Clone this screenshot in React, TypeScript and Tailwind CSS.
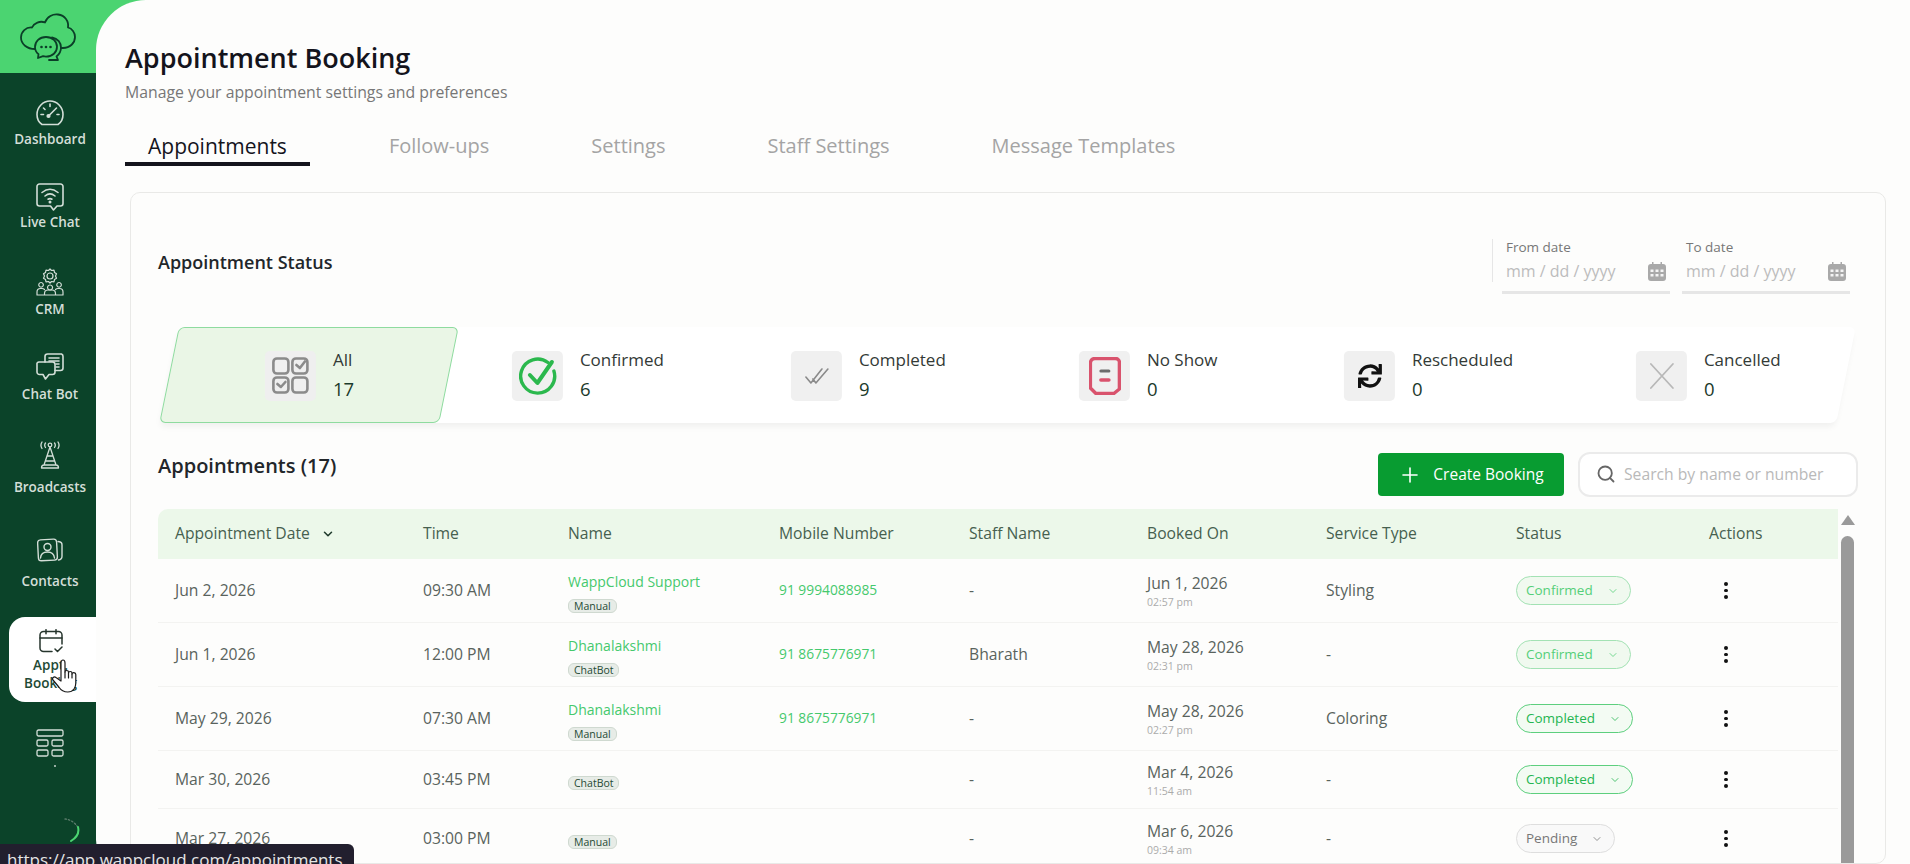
import React from "react";
import { FaSync } from "react-icons/fa";
import { Search, Plus, ChevronDown } from "lucide-react";

const s = { fill: "none", stroke: "currentColor", strokeWidth: 1.6, strokeLinecap: "round" as const, strokeLinejoin: "round" as const };

const Logo = () => (
  <svg width="56" height="48" viewBox="0 0 56 48" fill="none" stroke="#0b3f28" strokeWidth="1.8" strokeLinecap="round" strokeLinejoin="round">
    <path d="M15 36C7 36 1 31 1 24.5 1 18.5 6 14 12 14.5c2-4.500 8-7 13-5C27 3.500 33 .8 38 1.500c7 1 11 6.500 10 13 4 1 7 5 7 9.500 0 6-5 11-12 11h-2" />
    <path d="M26 24c-6.500 0-11 4.500-11 10 0 3 1.300 5.500 3.500 7.200L18 45l5-1.800c1 .3 2 .4 3 .4 6.500 0 11-4.300 11-9.800S32.500 24 26 24z" />
    <path d="M32 24.500c6 1 9 5.500 9 10 0 4-2 7-4.500 9l1.500 3.500h-9" />
    <circle cx="21.500" cy="34" r="1.300" fill="#0b3f28" stroke="none" />
    <circle cx="26" cy="34" r="1.300" fill="#0b3f28" stroke="none" />
    <circle cx="30.500" cy="34" r="1.300" fill="#0b3f28" stroke="none" />
  </svg>
);

const DashIcon = () => (
  <svg width="28" height="26" viewBox="0 0 28 26" {...s}>
    <path d="M6 24.500C3 22.500 1 19 1 14.500 1 7 7 1 14 1s13 6 13 13.500c0 4.500-2 8-5 10z" />
    <path d="M14 4v2.500M5 14.500h2.500M21 14.500h2M7.500 8l1.500 1.500M20.500 8 19 9.500M12.500 16l6-6" />
    <circle cx="12.500" cy="16" r="1.300" fill="currentColor" />
  </svg>
);
const LiveIcon = () => (
  <svg width="28" height="28" viewBox="0 0 28 28" {...s}>
    <path d="M3.500 1h21A2.500 2.500 0 0 1 27 3.500v17a2.500 2.500 0 0 1-2.500 2.500H21l-3.500 4-3-4h-11A2.500 2.500 0 0 1 1 20.500v-17A2.500 2.500 0 0 1 3.500 1z" />
    <path d="M6 9.500c5-4 11-4 16 0M9 13c3-2.500 7-2.500 10 0M12 16.200c1.300-.8 2.700-.8 4 0" />
    <circle cx="14" cy="19" r=".7" fill="currentColor" />
  </svg>
);
const CrmIcon = () => (
  <svg width="28" height="28" viewBox="0 0 28 28" {...s} strokeWidth={1.2}>
    <path d="M14 1l1.500 1.500 2.500-.3.500 2.300 2 1.300-1 2.200 1 2.200-2 1.300-.5 2.300-2.500-.3L14 15l-1.500-1.500-2.500.3-.5-2.300-2-1.300 1-2.200-1-2.200 2-1.300.5-2.300 2.500.3z" />
    <circle cx="14" cy="8" r="3" />
    <path d="M5 14.500a2.300 2.300 0 1 0 .1 0zM23 14.500a2.300 2.300 0 1 0 .1 0zM14 17a2.500 2.500 0 1 0 .1 0z" />
    <path d="M1 27v-3c0-2 1.500-3.500 3.500-3.500H6c1 0 2 .5 2.500 1M27 27v-3c0-2-1.500-3.500-3.500-3.500H22c-1 0-2 .5-2.500 1M8.500 27v-1.500c0-2 1.500-3.500 3.500-3.500h4c2 0 3.500 1.500 3.500 3.500V27M1 27h26" />
  </svg>
);
const BotIcon = () => (
  <svg width="28" height="28" viewBox="0 0 28 28" {...s}>
    <path d="M9 9V3.500A2.500 2.500 0 0 1 11.500 1h14A2.500 2.500 0 0 1 27 3.500V15a2.500 2.500 0 0 1-2.500 2.500H19" />
    <path d="M3 9h13.500A2.500 2.500 0 0 1 19 11.500V19a2.500 2.500 0 0 1-2.500 2.500H13L9.500 26 7 21.500H3.500A2.500 2.500 0 0 1 1 19v-7.500A2 2 0 0 1 3 9z" />
    <path d="M13 5h10M13 8h10M20 11h3M20 14h3" />
  </svg>
);
const TowerIcon = () => (
  <svg width="20" height="28" viewBox="0 0 20 28" {...s} strokeWidth={1.3}>
    <circle cx="10" cy="4" r="1.800" />
    <path d="M10 6 4 24M10 6l6 18M7.500 15h5M6 20h8M1.500 27c0-1.500 1-3 2.500-3h12c1.500 0 2.500 1.500 2.500 3zM5.500 2c-1 1.300-1 3 0 4.500M14.500 2c1 1.300 1 3 0 4.500M2 1c-1.300 2-1.300 4.500 0 6.500M18 1c1.300 2 1.300 4.500 0 6.500" />
  </svg>
);
const ContactIcon = () => (
  <svg width="26" height="24" viewBox="0 0 26 24" {...s} strokeWidth={1.4}>
    <rect x="1" y="1.500" width="19" height="21" rx="3" transform="rotate(-3 10 12)" />
    <path d="M21 3.500l1.500.3c1.300.3 2.500 1.500 2.500 3v11.500c0 2-1.500 3.500-3.500 3.700" />
    <circle cx="10.500" cy="9" r="3.500" />
    <path d="M3.500 20c.3-4 3-6 7-6s6.500 2 7 6" />
  </svg>
);
const ApptIcon = () => (
  <svg width="24" height="24" viewBox="0 0 24 24" fill="none" stroke="#26352d" strokeWidth="1.5" strokeLinecap="round" strokeLinejoin="round">
    <path d="M13 22.500H4.500a3.500 3.500 0 0 1-3.500-3.500V6a3.500 3.500 0 0 1 3.500-3.500h15A3.500 3.500 0 0 1 23 6v9" />
    <path d="M7 .7v4M17 .7v4M1 9h22" />
    <path d="M16 20l2.500 2.500L23 18" />
  </svg>
);
const GridIcon = () => (
  <svg width="28" height="28" viewBox="0 0 28 28" {...s} strokeWidth={1.3}>
    <rect x="1" y="1" width="26" height="6" rx="1.500" />
    <rect x="1" y="11" width="11" height="6" rx="1.500" />
    <rect x="16" y="11" width="11" height="6" rx="1.500" />
    <rect x="1" y="21" width="11" height="6" rx="1.500" />
    <rect x="16" y="21" width="11" height="6" rx="1.500" />
  </svg>
);
const HandCursor = () => (
  <svg width="27" height="34" viewBox="0 0 27 34" fill="#ffffff" stroke="#1b1b1b" strokeWidth="1.200" strokeLinejoin="round" strokeLinecap="round">
    <path d="M9 19V4c0-4 4-4 4 0v9c0-2 3.500-2 3.500 0v1c0-2 3.500-2 3.500 0v1c0-2 3.800-2 3.800 .5V24c0 4-2 9-8 9-5 0-7-2-9-5L1 21c-1.500-2 1-4 3-2.500L9 22z" />
    <path d="M13 13v6M16.500 14v5M20 15v4" />
  </svg>
);

const AllIcon = () => (
  <svg width="37" height="37" viewBox="0 0 37 37" fill="none" stroke="#8b8b8b" strokeWidth="2.600" strokeLinecap="round" strokeLinejoin="round">
    <rect x="1.500" y="1.500" width="15" height="15" rx="3.500" />
    <rect x="20.500" y="1.500" width="15" height="15" rx="3.500" />
    <rect x="1.500" y="20.500" width="15" height="15" rx="3.500" />
    <rect x="20.500" y="20.500" width="15" height="15" rx="3.500" />
    <path d="M24.500 8l3.500 3 5-6.500M5.500 27l3.500 3 4.500-5" />
  </svg>
);
const ConfirmedIcon = () => (
  <svg width="38" height="38" viewBox="0 0 38 38" fill="none" stroke="#2bb84d" strokeLinecap="round" strokeLinejoin="round">
    <path strokeWidth="3.400" d="M29 5.500A17 17 0 1 0 35 14" />
    <path strokeWidth="4" d="M11 18l7.500 8L33 5" />
  </svg>
);
const CompletedIcon = () => (
  <svg width="24" height="16" viewBox="0 0 24 16" fill="none" stroke="#8a8a8a" strokeWidth="1.600" strokeLinecap="round" strokeLinejoin="round">
    <path d="M1 9l5 6L17 1M8 11l3 4L23 1" />
  </svg>
);
const NoShowIcon = () => (
  <svg width="32" height="38" viewBox="0 0 32 38" fill="none" strokeLinecap="round" strokeLinejoin="round">
    <path stroke="#d9536d" strokeWidth="3.400" d="M6 1.500h20a4 4 0 0 1 4.500 4.500v26L25 36.500H7L1.500 31V6A4.500 4.500 0 0 1 6 1.500z" />
    <path stroke="#6c6c6c" strokeWidth="3" d="M12 14h8" />
    <path stroke="#d9536d" strokeWidth="3.500" d="M12 23h8" />
  </svg>
);
const CancelledIcon = () => (
  <svg width="24" height="26" viewBox="0 0 24 26" fill="none" stroke="#b8b8b8" strokeWidth="1.800" strokeLinecap="round">
    <path d="M1 1l22 24M23 1 1 25" />
  </svg>
);
const CalIcon = () => (
  <svg width="18" height="19" viewBox="0 0 18 19" fill="#a9a9a9">
    <path d="M4 0h1.500v2h7V0H14v2h1a3 3 0 0 1 3 3v11a3 3 0 0 1-3 3H3a3 3 0 0 1-3-3V5a3 3 0 0 1 3-3h1z" />
    <g fill="#f4f4f4">
      <rect x="2.500" y="7.500" width="3" height="2.500" />
      <rect x="7.500" y="7.500" width="3" height="2.500" />
      <rect x="12.500" y="7.500" width="3" height="2.500" />
      <rect x="2.500" y="12" width="3" height="2.500" />
      <rect x="7.500" y="12" width="3" height="2.500" />
      <rect x="12.500" y="12" width="3" height="2.500" />
    </g>
  </svg>
);

const navItems = [
  { label: "Dashboard", icon: <DashIcon />, cls: "h-[85px] pt-[27px] gap-[4px]" },
  { label: "Live Chat", icon: <LiveIcon />, cls: "h-[85px] pt-[26px] gap-[3px]" },
  { label: "CRM", icon: <CrmIcon />, cls: "h-[85px] pt-[26px] gap-[5px]" },
  { label: "Chat Bot", icon: <BotIcon />, cls: "h-[85px] pt-[26px] gap-[5px]" },
  { label: "Broadcasts", icon: <TowerIcon />, cls: "h-[95px] pt-[29px] gap-[10px]" },
  { label: "Contacts", icon: <ContactIcon />, cls: "h-[109px] pt-[29px] gap-[9px]" },
];

const rows = [
  { date: "Jun 2, 2026", time: "09:30 AM", name: "WappCloud Support", tag: "Manual", mobile: "91 9994088985", staff: "-", booked: "Jun 1, 2026", at: "02:57 pm", service: "Styling", status: "Confirmed", h: "h-[64px]" },
  { date: "Jun 1, 2026", time: "12:00 PM", name: "Dhanalakshmi", tag: "ChatBot", mobile: "91 8675776971", staff: "Bharath", booked: "May 28, 2026", at: "02:31 pm", service: "-", status: "Confirmed", h: "h-[64px]" },
  { date: "May 29, 2026", time: "07:30 AM", name: "Dhanalakshmi", tag: "Manual", mobile: "91 8675776971", staff: "-", booked: "May 28, 2026", at: "02:27 pm", service: "Coloring", status: "Completed", h: "h-[64px]" },
  { date: "Mar 30, 2026", time: "03:45 PM", name: "", tag: "ChatBot", mobile: "", staff: "-", booked: "Mar 4, 2026", at: "11:54 am", service: "-", status: "Completed", h: "h-[58px]" },
  { date: "Mar 27, 2026", time: "03:00 PM", name: "", tag: "Manual", mobile: "", staff: "-", booked: "Mar 6, 2026", at: "09:34 am", service: "-", status: "Pending", h: "h-[60px]" },
];

const headers = ["Time", "Name", "Mobile Number", "Staff Name", "Booked On", "Service Type", "Status", "Actions"];

const gridCols = "grid grid-cols-[248px_145px_211px_190px_178px_179px_190px_193px_146px] items-center";

const pillCls: Record<string, string> = {
  Confirmed: "border-[#a3e2b4] text-[#55cf79] bg-[#f0f9ef]",
  Completed: "border-[#5dcf7e] text-[#25b551] bg-[#f3fbf3]",
  Pending: "border-[#dedede] text-[#777777] bg-[#f9f9f9]",
};

function Pill({ status }: { status: string }) {
  return (
    <span className={`inline-flex items-center h-[29px] pl-[9px] pr-[11px] gap-[14px] rounded-full border text-[13.5px] ${pillCls[status]}`}>
      {status}
      <ChevronDown size={12} strokeWidth={1.6} />
    </span>
  );
}

function Dots() {
  return (
    <span className="flex flex-col items-center gap-[3px] w-[3.500px] ml-[15px]">
      <i className="w-[3.500px] h-[3.500px] rounded-full bg-[#111111]" />
      <i className="w-[3.500px] h-[3.500px] rounded-full bg-[#111111]" />
      <i className="w-[3.500px] h-[3.500px] rounded-full bg-[#111111]" />
    </span>
  );
}

function Stat({ icon, label, value, cls }: { icon: React.ReactNode; label: string; value: string; cls: string }) {
  return (
    <div className={cls}>
      <div className="skew-x-[11.5deg] flex items-center gap-[17px]">
        <div className="w-[51px] h-[50px] rounded-[5px] bg-[#f0f0f0] flex items-center justify-center shrink-0">{icon}</div>
        <div className="flex flex-col">
          <span className="text-[17px] leading-[20px] text-[#333a36]">{label}</span>
          <span className="text-[18.5px] leading-[24px] mt-[7px] font-medium text-[#1b3a2b]">{value}</span>
        </div>
      </div>
    </div>
  );
}

function DateField({ label }: { label: string }) {
  return (
    <div className="w-[168px] h-[55px] border-b-[3px] border-[#e6e6e6] pl-[4px] pr-[4px] flex flex-col">
      <span className="text-[13.5px] leading-[16px] text-[#777777]">{label}</span>
      <div className="flex items-center justify-between mt-[6px]">
        <span className="text-[16px] leading-[20px] text-[#bcbcbc]">mm / dd / yyyy</span>
        <CalIcon />
      </div>
    </div>
  );
}

export default function App() {
  return (
    <div className="relative w-full h-screen overflow-hidden flex bg-[linear-gradient(#4bd471_73px,#0b4329_73px)] font-['Open_Sans',sans-serif]">
      <aside className="w-[96px] shrink-0 flex flex-col text-[#d3ded7]">
        <div className="h-[73px] pt-[13px] pl-[20px]">
          <Logo />
        </div>
        {navItems.map((n) => (
          <div key={n.label} className={`flex flex-col items-center pl-[4px] ${n.cls}`}>
            <div className="h-[26px] flex items-center justify-center">{n.icon}</div>
            <span className="text-[13.5px] leading-[18px] font-semibold">{n.label}</span>
          </div>
        ))}
        <div className="h-[85px] ml-[9px] rounded-l-[16px] bg-white flex flex-col items-center pt-[12px] pr-[4px] text-[#1e4a35]">
          <ApptIcon />
          <span className="mt-[3px] text-[13.5px] leading-[18px] font-semibold text-center">Appt.<br />Booking</span>
        </div>
        <div className="flex flex-col items-center pl-[4px] pt-[27px] text-[#d3ded7]">
          <GridIcon />
          <i className="block w-[2px] h-[2px] rounded-full bg-[#c5d2ca] mt-[8px] ml-[10px]" />
        </div>
        <div className="mt-auto mb-[22px] ml-[62px]">
          <svg width="20" height="24" viewBox="0 0 20 24" fill="none" strokeLinecap="round">
            <path d="M3 1c4 .5 9 2.500 12 7" stroke="#5d7d6c" strokeWidth="1.300" strokeDasharray="1.500 2" />
            <path d="M16 9c1.300 5-.5 10-7 14" stroke="#4bd471" strokeWidth="2" />
          </svg>
        </div>
      </aside>

      <main className="flex-1 min-w-0 bg-[#fdfdfc] rounded-tl-[50px] rounded-bl-[24px] flex flex-col overflow-hidden">
        <header className="pl-[29px] pt-[40px]">
          <h1 className="text-[27px] leading-[36px] font-semibold text-[#14141c]">Appointment Booking</h1>
          <p className="text-[15.8px] leading-[20px] mt-[6px] text-[#777777]">Manage your appointment settings and preferences</p>
          <nav className="flex gap-[56px] mt-[30px]">
            {["Appointments", "Follow-ups", "Settings", "Staff Settings", "Message Templates"].map((t, i) => (
              <div
                key={t}
                className={
                  i === 0
                    ? "px-[23px] h-[34px] leading-[28px] text-[21px] font-medium text-[#14141c] border-b-[4px] border-[#14141c]"
                    : "px-[23px] h-[34px] leading-[28px] text-[20px] text-[#a4a4a4]"
                }
              >
                {t}
              </div>
            ))}
          </nav>
        </header>

        <section className="ml-[34px] mr-[24px] mt-[26px] flex-1 min-h-0 rounded-[10px] border border-[#e9e9e7] overflow-hidden">
          <div className="flex items-start justify-between pt-[46px] pl-[27px] pr-[35px]">
            <h2 className="mt-[11px] text-[18px] leading-[24px] font-semibold text-[#22262a]">Appointment Status</h2>
            <div className="flex gap-[12px] relative">
              <span className="absolute -left-[10px] top-0 h-[43px] w-px bg-[#e6e6e6]" />
              <DateField label="From date" />
              <DateField label="To date" />
            </div>
          </div>

          <div className="ml-[38px] mt-[33px] w-[1677px] h-[96px] flex skew-x-[-11.5deg] bg-[#ffffff] rounded-[6px] shadow-[0_5px_6px_-1px_rgba(0,0,0,0.05)]">
            <div className="w-[280px] shrink-0 h-full pl-[95px] flex items-center rounded-[6px] border border-[#8edb9f] bg-[#eaf6e6]">
              <div className="skew-x-[11.5deg] flex items-center gap-[17px]">
                <div className="w-[51px] h-[50px] rounded-[5px] bg-[#efefef] flex items-center justify-center shrink-0"><AllIcon /></div>
                <div className="flex flex-col">
                  <span className="text-[17px] leading-[20px] text-[#333a36]">All</span>
                  <span className="text-[18.5px] leading-[24px] mt-[7px] font-medium text-[#1b3a2b]">17</span>
                </div>
              </div>
            </div>
            <Stat icon={<ConfirmedIcon />} label="Confirmed" value="6" cls="ml-[63px] w-[279px] shrink-0 flex items-center" />
            <Stat icon={<CompletedIcon />} label="Completed" value="9" cls="w-[288px] shrink-0 flex items-center" />
            <Stat icon={<NoShowIcon />} label="No Show" value="0" cls="w-[265px] shrink-0 flex items-center" />
            <Stat icon={<FaSync size={24} color="#111111" />} label="Rescheduled" value="0" cls="w-[292px] shrink-0 flex items-center" />
            <Stat icon={<CancelledIcon />} label="Cancelled" value="0" cls="flex-1 flex items-center" />
          </div>

          <div className="flex items-center pl-[27px] pr-[27px] mt-[28px] h-[46px]">
            <h2 className="flex-1 -mt-[16px] text-[20px] leading-[28px] font-semibold text-[#22262a]">Appointments (17)</h2>
            <button className="w-[186px] h-[43px] mt-[1px] rounded-[4px] bg-[#089c31] text-white text-[15.5px] font-medium flex items-center justify-center gap-[11px]">
              <Plus size={24} strokeWidth={1.6} />
              Create Booking
            </button>
            <div className="w-[280px] h-[45px] ml-[14px] rounded-[12px] border-2 border-[#ebebeb] bg-white flex items-center pl-[16px] gap-[8px]">
              <Search size={20} strokeWidth={2.200} className="text-[#666666]" />
              <span className="mt-[1px] text-[15.7px] text-[#b9b9b9]">Search by name or number</span>
            </div>
          </div>

          <div className="flex ml-[27px] mt-[12px]">
            <div className="w-[1680px] shrink-0">
              <div className={`${gridCols} h-[50px] bg-[#ecf8ea] rounded-tl-[10px] text-[15.7px] text-[#46604f]`}>
                <div className="pl-[17px] flex items-center gap-[11px]">
                  Appointment Date
                  <ChevronDown size={14} strokeWidth={2.600} className="text-[#1f3a2c]" />
                </div>
                {headers.map((h) => (
                  <div key={h} className="pl-[17px]">{h}</div>
                ))}
              </div>
              {rows.map((r, i) => (
                <div key={i} className={`${gridCols} ${r.h} border-b border-[#f3f3f1] text-[15.7px] text-[#59635d]`}>
                  <div className="pl-[17px]">{r.date}</div>
                  <div className="pl-[17px]">{r.time}</div>
                  <div className={`pl-[17px] flex flex-col items-start ${r.name ? "pt-[4px]" : ""}`}>
                    {r.name && <span className="text-[14px] leading-[18px] text-[#45c96d]">{r.name}</span>}
                    <span className={`${r.name ? "mt-[8px]" : "mt-[6px]"} h-[14px] px-[5px] rounded-[6px] border border-[#cfd9d0] bg-[#e7ece7] text-[10.5px] leading-[12px] text-[#1f4a35]`}>{r.tag}</span>
                  </div>
                  <div className="pl-[17px] text-[13.8px] text-[#45c96d]">{r.mobile}</div>
                  <div className="pl-[17px]">{r.staff}</div>
                  <div className="pl-[17px] flex flex-col">
                    <span className="leading-[20px]">{r.booked}</span>
                    <span className="text-[10.5px] leading-[14px] mt-[2px] text-[#ababab]">{r.at}</span>
                  </div>
                  <div className="pl-[17px]">{r.service}</div>
                  <div className="pl-[17px] flex"><Pill status={r.status} /></div>
                  <div className="pl-[17px]"><Dots /></div>
                </div>
              ))}
            </div>
            <div className="w-[13px] ml-[3px] shrink-0 flex flex-col items-center pt-[6px]">
              <span className="w-0 h-0 border-x-[7px] border-x-transparent border-b-[10px] border-b-[#9a9a9a]" />
              <span className="w-[13px] h-[400px] mt-[11px] rounded-full bg-[#9a9a9a]" />
            </div>
          </div>
        </section>
      </main>

      <div className="absolute left-[52px] top-[659px]"><HandCursor /></div>
      <div className="absolute left-0 bottom-0 w-[354px] h-[20px] rounded-tr-[6px] bg-[#221f2e] overflow-hidden pl-[7px]">
        <span className="block text-[17px] leading-[24px] pt-[4px] text-[#e6e6e6]">https://app.wappcloud.com/appointments</span>
      </div>
    </div>
  );
}
